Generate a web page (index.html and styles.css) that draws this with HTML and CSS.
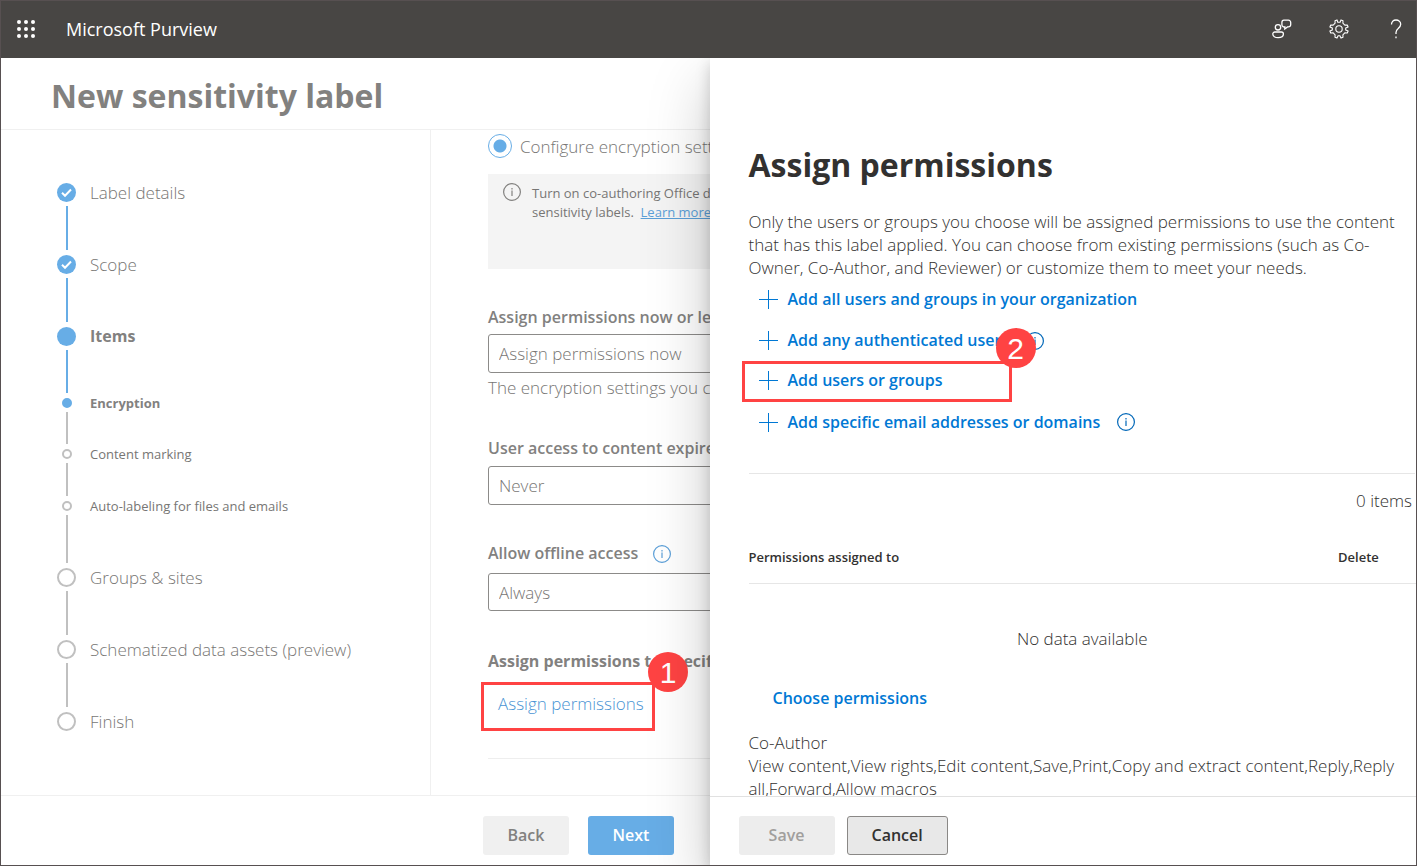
FILE: index.html
```html
<!DOCTYPE html>
<html lang="en">
<head>
<meta charset="utf-8">
<title>Microsoft Purview</title>
<link rel="stylesheet" href="styles.css">
</head>
<body>
<div class="app">
  <header class="topbar">
    <button class="icon-btn" aria-label="App launcher">
      <svg width="20" height="20" viewBox="0 0 20 20" fill="currentColor"><circle cx="3" cy="3" r="2"/><circle cx="10" cy="3" r="2"/><circle cx="17" cy="3" r="2"/><circle cx="3" cy="10" r="2"/><circle cx="10" cy="10" r="2"/><circle cx="17" cy="10" r="2"/><circle cx="3" cy="17" r="2"/><circle cx="10" cy="17" r="2"/><circle cx="17" cy="17" r="2"/></svg>
    </button>
    <span class="brand">Microsoft Purview</span>
    <div class="tools">
      <button class="icon-btn" aria-label="Feedback">
        <svg width="20" height="20" viewBox="0 0 20 20" fill="none" stroke="currentColor" stroke-width="1.3"><circle cx="6" cy="8.300" r="2.700"/><path d="M2.800 13h6.600a2 2 0 0 1 2 2c0 2.300-2.200 3.700-5.300 3.700S.8 17.300.8 15a2 2 0 0 1 2-2z"/><path d="M11.900 1.200h4.600a2.200 2.200 0 0 1 2.200 2.200v2.300a2.200 2.200 0 0 1-2.200 2.200h-1L12.800 10V7.900A2.300 2.300 0 0 1 9.900 5.700V3.400a2.200 2.200 0 0 1 2-2.200z"/></svg>
      </button>
      <button class="icon-btn" aria-label="Settings">
        <svg width="20" height="20" viewBox="0 0 20 20" fill="none" stroke="currentColor" stroke-width="1.100" stroke-linejoin="round"><circle cx="10" cy="10" r="3.200"/><path d="M8.800 3.300 8 .9l-2 .8.1 2.500L4.200 6.100 1.700 6 .9 8l2.400 1.100v1.800L.9 12l.8 2 2.500-.1 1.900 1.900L6 18.300l2 .8 1.100-2.400h1.800l1.100 2.400 2-.8-.1-2.500 1.900-1.900 2.500.1.800-2-2.400-1.100V9.100L19.100 8l-.8-2-2.500.1-1.900-1.900.1-2.500-2-.8-.9 2.400z"/></svg>
      </button>
      <button class="icon-btn" aria-label="Help">
        <svg width="20" height="20" viewBox="0 0 20 20" fill="none" stroke="currentColor" stroke-width="1.300"><path d="M5.500 5.500C5.500 2.600 7.400 1 10 1s4.700 1.700 4.700 4.300c0 2-1.200 3.100-2.500 4.300-1.400 1.200-2.200 2-2.200 4V15M10 17.500v1.700"/></svg>
      </button>
    </div>
  </header>

  <div class="stage">
    <main class="wizard">
      <h1 class="page-title">New sensitivity label</h1>
      <div class="columns">
        <ol class="steps">
          <li class="step done"><span class="rail"><svg class="dot" viewBox="0 0 19 19"><path d="m5 9.700 3 3 6-6.200" fill="none" stroke="#fff" stroke-width="2"/></svg></span><span class="step-name">Label details</span></li>
          <li class="step done"><span class="rail"><svg class="dot" viewBox="0 0 19 19"><path d="m5 9.700 3 3 6-6.200" fill="none" stroke="#fff" stroke-width="2"/></svg></span><span class="step-name">Scope</span></li>
          <li class="step done current"><span class="rail"><span class="dot"></span></span><span class="step-name">Items</span></li>
          <li class="step sub active"><span class="rail"><span class="dot"></span></span><span class="step-name">Encryption</span></li>
          <li class="step sub"><span class="rail"><span class="dot"></span></span><span class="step-name">Content marking</span></li>
          <li class="step sub last-sub"><span class="rail"><span class="dot"></span></span><span class="step-name">Auto-labeling for files and emails</span></li>
          <li class="step"><span class="rail"><span class="dot"></span></span><span class="step-name">Groups &amp; sites</span></li>
          <li class="step"><span class="rail"><span class="dot"></span></span><span class="step-name">Schematized data assets (preview)</span></li>
          <li class="step final"><span class="rail"><span class="dot"></span></span><span class="step-name">Finish</span></li>
        </ol>

        <form class="form">
          <label class="radio"><input type="radio" name="enc" checked>Configure encryption settings</label>
          <div class="note">
            <svg class="info" viewBox="0 0 18 18"><circle cx="9" cy="9" r="8.400"/><path d="M9 7.500V13M9 5v1.500"/></svg>
            <p>Turn on co-authoring Office desktop apps for files with<br>sensitivity labels. &nbsp;<a href="#">Learn more about this</a></p>
          </div>
          <div class="field">
            <label for="when">Assign permissions now or let users decide?</label>
            <select id="when"><option>Assign permissions now</option></select>
            <p class="hint">The encryption settings you choose will be enforced</p>
          </div>
          <div class="field expiry">
            <label for="expires">User access to content expires</label>
            <select id="expires"><option>Never</option></select>
          </div>
          <div class="field offline">
            <div class="label-row">
              <label for="offline">Allow offline access</label>
              <svg class="info blue" viewBox="0 0 18 18"><circle cx="9" cy="9" r="8.400"/><path d="M9 7.500V13M9 5v1.500"/></svg>
            </div>
            <select id="offline"><option>Always</option></select>
          </div>
          <div class="assign">
            <p class="strong">Assign permissions to specific users and groups</p>
            <div class="callout">
              <button type="button" class="link-btn">Assign permissions</button>
              <span class="badge">1</span>
            </div>
          </div>
          <hr class="rule">
        </form>
      </div>
      <footer class="wizard-actions">
        <button class="btn">Back</button>
        <button class="btn primary">Next</button>
      </footer>
    </main>

    <aside class="panel">
      <div class="panel-body">
        <h2>Assign permissions</h2>
        <p class="text">Only the users or groups you choose will be assigned permissions to use the content that has this label applied. You can choose from existing permissions (such as Co-Owner, Co-Author, and Reviewer) or customize them to meet your needs.</p>
        <ul class="actions">
          <li><button class="add"><svg class="plus" viewBox="0 0 19 19"><path d="M0 9.500h19M9.500 0v19"/></svg>Add all users and groups in your organization</button></li>
          <li><button class="add"><svg class="plus" viewBox="0 0 19 19"><path d="M0 9.500h19M9.500 0v19"/></svg>Add any authenticated users</button><svg class="info deep" viewBox="0 0 18 18"><circle cx="9" cy="9" r="8.400"/><path d="M9 7.500V13M9 5v1.500"/></svg></li>
          <li class="marked"><button class="add"><svg class="plus" viewBox="0 0 19 19"><path d="M0 9.500h19M9.500 0v19"/></svg>Add users or groups</button><span class="badge">2</span></li>
          <li><button class="add"><svg class="plus" viewBox="0 0 19 19"><path d="M0 9.500h19M9.500 0v19"/></svg>Add specific email addresses or domains</button><svg class="info deep" viewBox="0 0 18 18"><circle cx="9" cy="9" r="8.400"/><path d="M9 7.500V13M9 5v1.500"/></svg></li>
        </ul>
        <p class="count">0 items</p>
        <table class="grid">
          <thead><tr><th>Permissions assigned to</th><th class="delete">Delete</th></tr></thead>
          <tbody><tr><td colspan="2">No data available</td></tr></tbody>
        </table>
        <button class="choose">Choose permissions</button>
        <p class="text">Co-Author<br>View content,View rights,Edit content,Save,Print,Copy and extract content,Reply,Reply all,Forward,Allow macros</p>
      </div>
      <footer class="panel-actions">
        <button class="btn disabled" disabled>Save</button>
        <button class="btn outlined">Cancel</button>
      </footer>
    </aside>
  </div>
</div>
</body>
</html>
```

FILE: styles.css
```css
* { box-sizing: border-box; }
html, body { height: 100%; margin: 0; }
body {
  font-family: "Open Sans", "Noto Sans", sans-serif;
  font-size: 17px;
  font-weight: 300;
  line-height: 23px;
  color: #323130;
}
h1, h2, p, ul, ol { margin: 0; padding: 0; }
ul, ol { list-style: none; }
button, select, input { font: inherit; }
button { border: 0; background: none; padding: 0; cursor: pointer; }

.app {
  display: flex;
  flex-direction: column;
  height: 100vh;
  border: 1px solid #575051;
  overflow: hidden;
}

/* Top bar */
.topbar {
  position: relative;
  z-index: 2;
  flex: none;
  display: flex;
  align-items: center;
  height: 57px;
  padding: 0 10px 2px 15px;
  background: #484644;
  color: #fff;
}
.icon-btn { display: flex; color: inherit; }
.brand { margin-left: 30px; font-size: 18px; font-weight: 500; line-height: 24px; }
.tools { display: flex; gap: 37px; margin-left: auto; }

.stage { position: relative; flex: 1; min-height: 0; overflow: hidden; }

/* Wizard */
.wizard { display: flex; flex-direction: column; height: 100%; color: #777674; }
.page-title {
  flex: none;
  padding: 18px 50px 13px;
  border-bottom: 1px solid #f0f0f0;
  color: #82817f;
  font-size: 32px;
  line-height: 40px;
  font-weight: 700;
}
.columns { flex: 1; display: flex; min-height: 0; overflow: hidden; }

.steps { flex: none; width: 430px; padding: 53px 0 0 56px; border-right: 1px solid #f0f0f0; }
.step { display: flex; height: 72px; }
.rail { flex: none; display: flex; flex-direction: column; align-items: center; gap: 4px; width: 19px; margin-right: 14px; }
.rail::after { content: ""; flex: 1; width: 2px; margin-bottom: 5px; background: #c0c0c0; }
.dot { flex: none; width: 19px; height: 19px; border: 2px solid #c0c0c0; border-radius: 50%; }
.step-name { line-height: 19px; }
.done .dot { border: 0; background: #67ade6; }
.done .rail::after { background: #67ade6; }
.current { height: 71px; font-size: 16px; }
.current .step-name, .active .step-name { color: #82817f; font-weight: 700; }
.sub { height: 52px; font-size: 13px; font-weight: 400; }
.sub .dot { width: 10px; height: 10px; }
.sub .step-name { line-height: 10px; }
.active { height: 51px; }
.active .dot { background: #67ade6; border-color: #67ade6; }
.last-sub { height: 67px; }
.final .rail::after { display: none; }

.form { flex: 1; min-width: 0; padding: 4px 57px 0; white-space: nowrap; }
.radio { display: flex; align-items: center; gap: 8px; height: 24px; }
.radio input {
  appearance: none;
  width: 24px;
  height: 24px;
  margin: 0;
  border: 1px solid #67ade6;
  border-radius: 50%;
  background: radial-gradient(circle, #67ade6 6px, transparent 7px);
}
.note {
  display: flex;
  gap: 11px;
  height: 95px;
  margin-top: 16px;
  padding: 9px 15px;
  background: #f4f4f4;
  font-size: 13px;
  font-weight: 400;
  line-height: 19px;
}
.note p { padding-top: 1px; }
.note a { color: #5b9fd8; }
.info { flex: none; width: 18px; height: 18px; fill: none; stroke: #82817f; stroke-width: 1.200; }
.info.blue { stroke: #5b9fd8; }
.info.deep { stroke: #0067b8; }
.field { display: flex; flex-direction: column; margin-top: 37px; }
.field label, .strong { color: #82817f; font-size: 16px; font-weight: 600; }
.field select {
  appearance: none;
  width: 100%;
  height: 39px;
  margin-top: 5px;
  padding: 0 10px;
  border: 1px solid #8c8b89;
  border-radius: 3px;
  background: transparent;
  color: inherit;
}
.hint { margin-top: 3px; }
.field.expiry { margin-top: 38px; }
.field.expiry select { margin-top: 6px; }
.field.offline { margin-top: 37px; }
.field.offline select { height: 38px; margin-top: 8px; }
.label-row { display: flex; align-items: center; gap: 15px; }
.assign { margin-top: 39px; }
.strong { font-weight: 700; }
.callout {
  position: relative;
  display: inline-flex;
  align-items: center;
  width: 174px;
  height: 49px;
  margin: 9px 0 0 -7px;
  padding: 0 0 6px 14px;
  border: 3px solid #ff4343;
}
.link-btn { color: #4a94d4; }
.badge {
  position: absolute;
  top: -33px;
  right: -36px;
  width: 40px;
  height: 40px;
  border-radius: 50%;
  background: #ff4343;
  color: #fff;
  font: 30px/42px "Liberation Sans", Arial, sans-serif;
  text-align: center;
}
.rule { margin: 27px 0 0; border: 0; border-top: 1px solid #eee; }

.wizard-actions { flex: none; display: flex; gap: 19px; padding: 20px 482px 10px; border-top: 1px solid #f0f0f0; }
.btn { min-width: 86px; height: 39px; padding: 0 24px; border-radius: 3px; background: #f0f0f0; color: #82817f; font-size: 16px; font-weight: 600; }
.btn.primary { background: #67ade6; color: #fff; }

/* Side panel */
.panel {
  position: absolute;
  top: 0;
  right: 0;
  bottom: 0;
  left: calc(50% + 1px);
  display: flex;
  flex-direction: column;
  background: #fff;
  box-shadow: 0 26px 58px rgba(0, 0, 0, .22), 0 5px 14px rgba(0, 0, 0, .18);
}
.panel-body { flex: 1; min-height: 0; overflow: hidden; padding: 87px 0 0 39px; }
.panel h2 { font-size: 32px; line-height: 40px; font-weight: 700; }
.text { padding-right: 10px; }
.panel h2 + .text { margin-top: 25px; }
.actions { margin-right: 1px; padding-bottom: 31px; border-bottom: 1px solid #e6e6e6; }
.actions li { display: flex; align-items: center; gap: 17px; height: 41px; padding-left: 10px; }
.actions li:last-child { height: 40px; }
.add { display: flex; align-items: center; gap: 10px; color: #0078d4; font-size: 16px; font-weight: 600; }
.plus { width: 19px; height: 19px; stroke: #0078d4; stroke-width: 1; }
.actions .marked {
  position: relative;
  width: 270px;
  margin-left: -7px;
  padding: 0 0 2px 14px;
  border: 3px solid #ff4343;
}
.marked .badge { top: -36px; right: -27px; }
.count { margin: 15px 4px 0; text-align: right; }
.grid { width: 100%; margin-top: 20px; border-collapse: collapse; }
.grid th { height: 51px; padding: 0; border-bottom: 1px solid #e6e6e6; font-size: 13px; font-weight: 600; text-align: left; }
.grid .delete { width: 78px; }
.grid td { height: 111px; padding: 0; text-align: center; }
.choose { display: block; margin: -7px 0 21px 24px; color: #0078d4; font-size: 16px; font-weight: 600; }
.panel-actions { flex: none; display: flex; gap: 12px; padding: 19px 29px 10px; border-top: 1px solid #e1e1e1; background: #fff; }
.panel-actions .btn { min-width: 96px; }
.btn.disabled { background: #ededed; color: #a19f9d; }
.btn.outlined { border: 1px solid #8a8886; background: #e8e8e8; color: #323130; }
```
